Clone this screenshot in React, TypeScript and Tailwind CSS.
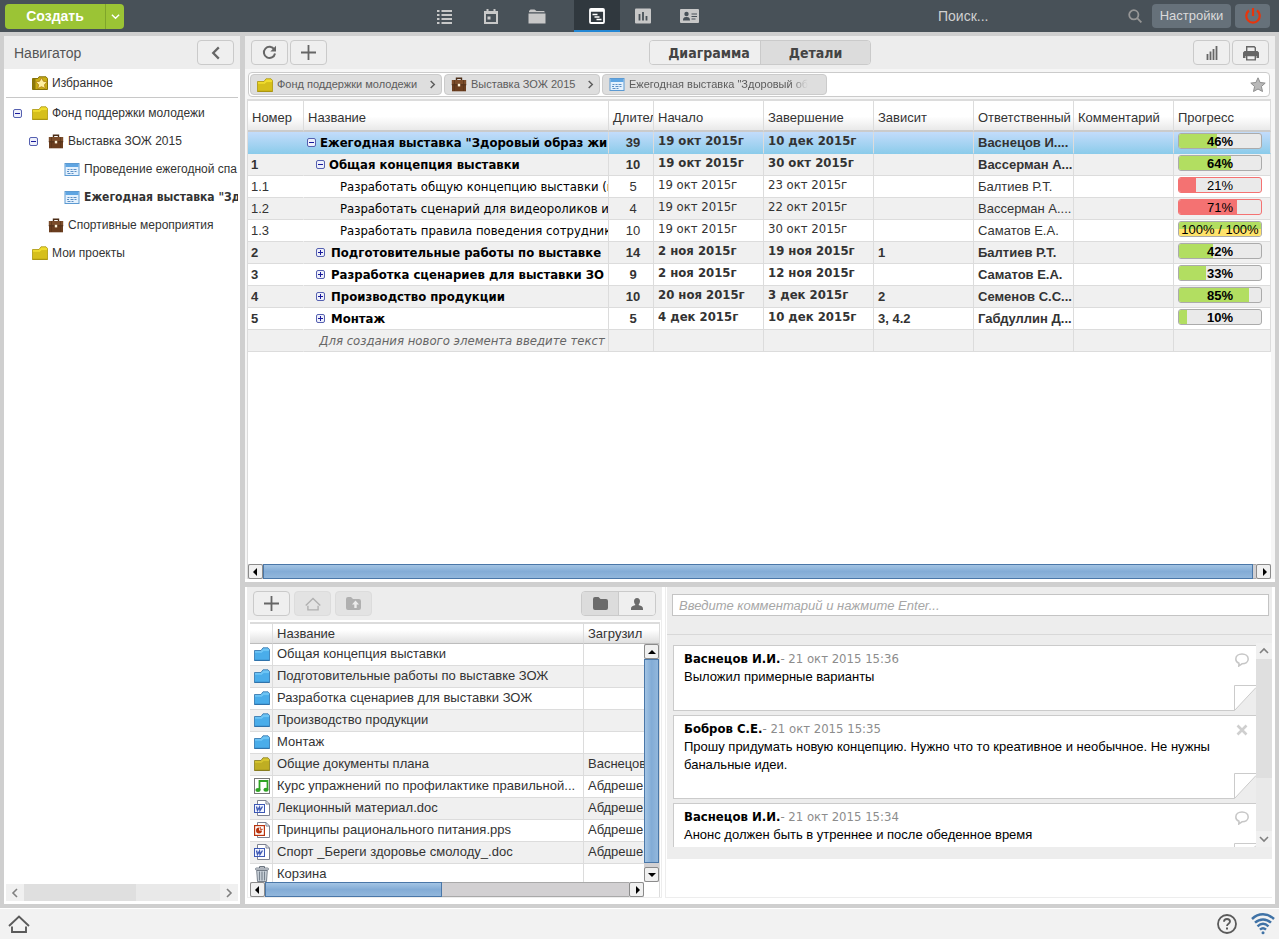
import type { ReactNode } from 'react'
import clsx from 'clsx'

const SANS = "font-['Liberation_Sans',Arial,sans-serif]"
const TAHOMA = "font-['DejaVu_Sans_Condensed','DejaVu_Sans',sans-serif]"

/* ---------- Icons ---------- */

const FolderIcon = ({ color = 'yellow' }: { color?: 'yellow' | 'blue' | 'olive' }) => {
  const tones = {
    yellow: ['#f0dc2e', '#cdb516', '#a8930c'],
    blue: ['#6cc4f5', '#3fa5e6', '#2b6ea8'],
    olive: ['#d6c52f', '#b7a620', '#857a1a'],
  }
  const [light, dark, line] = tones[color]
  return (
    <svg viewBox="0 0 16 14" className="h-3.5 w-4 shrink-0">
      <path d="M.5 13.5V3.500H7L9 .8h5l1.500 1.700v11z" fill={light} stroke={line} strokeWidth=".8" />
      <path d="M.9 5.500h7L9.600 4h5.500v9.100H.9z" fill={dark} fillOpacity=".75" />
      <path d="M1 5.200h6.800L9.500 3.600h5.600" fill="none" stroke={light} strokeWidth=".9" />
      <path d="M.5 13.300h15" stroke={line} strokeWidth="1" />
    </svg>
  )
}

const FavoriteIcon = () => (
  <svg viewBox="0 0 16 14" className="h-3.5 w-4 shrink-0">
    <path d="M.5 13.500v-11H6l1-1.700h7l1.500 1.700v11z" fill="#c9ae14" stroke="#86720a" />
    <path d="M.5 13V3h3v10z" fill="#8d780a" />
    <path
      d="M9.500 1.800l1.900 3.500 3.900.6-2.800 2.700.7 4-3.700-1.900-3.600 1.900.7-4-2.900-2.700 3.900-.6z"
      fill="#ffefa0"
      stroke="#b07d10"
      strokeWidth=".8"
    />
  </svg>
)

const BriefcaseIcon = () => (
  <svg viewBox="0 0 16 15" className="h-[15px] w-4 shrink-0">
    <path d="M5.500 3V1.200h5V3" fill="none" stroke="#4b2c16" strokeWidth="1.400" />
    <rect x=".8" y="3" width="14.400" height="5" fill="#7b4c2a" />
    <rect x="1" y="7.500" width="14" height="6.800" fill="#6a3d1e" />
    <path d="M.8 7.800h14.400" stroke="#4b2c16" strokeWidth=".9" />
    <path d="M3.500 3v11M12.500 3v11" stroke="#573319" strokeWidth=".7" />
    <rect x="6.800" y="6.800" width="2.400" height="2.600" fill="#fff3d8" />
  </svg>
)

const PlanIcon = () => (
  <svg viewBox="0 0 15 13" className="h-[13px] w-4 shrink-0">
    <rect x=".5" y=".5" width="14" height="12" fill="#e4f1fd" stroke="#5c9ad2" />
    <rect x="1" y="1" width="13" height="3" fill="#5fa5e2" />
    <path d="M3 6.500h2M6 6.500h2M9 6.500h3M2.500 8.500h2M6 8.500h3M10 8.500h2M3 10.500h3M7 10.500h2" stroke="#5c8fc4" />
  </svg>
)

const Expander = ({ open }: { open: boolean }) => (
  <svg viewBox="0 0 9 9" className="h-[9px] w-[9px] shrink-0">
    <rect x=".5" y=".5" width="8" height="8" rx="1.500" fill="#eef0fb" stroke="#5560b0" />
    <path d={open ? 'M2 4.500h5' : 'M2 4.500h5M4.500 2v5'} stroke="#1a1a9c" />
  </svg>
)

const PlusIcon = () => (
  <svg viewBox="0 0 15 15" className="h-[15px] w-[15px]">
    <path d="M7.500 0v15M0 7.500h15" stroke="#666" strokeWidth="1.800" />
  </svg>
)

const RefreshIcon = () => (
  <svg viewBox="0 0 15 15" className="h-[15px] w-[15px]">
    <path d="M12.300 4.500A5.600 5.600 0 1 0 13 8.500" fill="none" stroke="#666" strokeWidth="2" />
    <path d="M14 .8v5.700H8.300z" fill="#666" />
  </svg>
)

const HomeIcon = ({ className }: { className: string }) => (
  <svg viewBox="0 0 22 18" className={className} fill="none" stroke="currentColor" strokeWidth="1.900">
    <path d="M1 11L11 1.500 21 11" />
    <path d="M4 11.500v5.500h14v-5.500" />
  </svg>
)

const ArrowIcon = ({ dir }: { dir: 'left' | 'right' | 'up' | 'down' }) => {
  const shapes = { left: 'M5 0v8L1 4z', right: 'M3 0v8l4-4z', up: 'M0 6h8L4 2z', down: 'M0 2h8L4 6z' }
  return (
    <svg viewBox="0 0 8 8" className="h-2 w-2">
      <path d={shapes[dir]} fill="#000" />
    </svg>
  )
}

const Chevron = ({ dir, className }: { dir: 'left' | 'right' | 'up' | 'down'; className: string }) => {
  const shapes = { left: 'M7 1L3 5l4 4', right: 'M3 1l4 4-4 4', up: 'M1 7l4-4 4 4', down: 'M1 3l4 4 4-4' }
  return (
    <svg viewBox="0 0 10 10" className={className}>
      <path d={shapes[dir]} fill="none" stroke="currentColor" strokeWidth="1.600" />
    </svg>
  )
}

const MusicIcon = () => (
  <svg viewBox="0 0 16 16" className="h-4 w-4">
    <rect x=".5" y=".5" width="15" height="15" fill="#fff" stroke="#777" />
    <path d="M5.500 12V3h8v8.500" fill="none" stroke="#2fa324" strokeWidth="1.800" />
    <ellipse cx="4" cy="12" rx="2.600" ry="2" fill="#2fa324" />
    <ellipse cx="12" cy="11.700" rx="2.600" ry="2" fill="#2fa324" />
  </svg>
)

const DocIcon = ({ kind }: { kind: 'word' | 'slides' }) => (
  <svg viewBox="0 0 16 16" className="h-4 w-4">
    <path d="M3.500.5h8.500l3.500 3.500v11.500h-12z" fill="#fff" stroke="#7b8090" />
    <path d="M12 .5V4h3.500" fill="none" stroke="#7b8090" />
    {kind === 'word' ? (
      <>
        <rect x=".5" y="4.500" width="10" height="8" fill="#f2f5ff" stroke="#3c58b4" />
        <path d="M2.500 6.500l1 4 2-3.500.5 3.500 2.500-4" fill="none" stroke="#3c58b4" strokeWidth="1.400" />
      </>
    ) : (
      <>
        <rect x=".6" y="3.600" width="9.800" height="9.800" fill="#fff" stroke="#b8330e" strokeWidth="1.200" />
        <path d="M5 5.500a3 3 0 1 0 3 3H5z" fill="#b8330e" />
        <path d="M6.200 5v2.300h2.500" fill="none" stroke="#b8330e" />
      </>
    )}
  </svg>
)

const TrashIcon = () => (
  <svg viewBox="0 0 16 16" className="h-4 w-4">
    <path d="M5.500 2V.6h5V2" fill="none" stroke="#5d6773" />
    <rect x="1.500" y="2" width="13" height="2" rx="1" fill="#e3e7ec" stroke="#5d6773" strokeWidth=".8" />
    <path d="M2.700 4.500h10.600l-.8 11h-9z" fill="#cfd6de" stroke="#5d6773" strokeWidth=".8" />
    <path d="M5.500 5.500v9M8 5.500v9M10.500 5.500v9" stroke="#77828e" strokeWidth="1.200" />
  </svg>
)

/* ---------- Shared controls ---------- */

type ToolButtonProps = { label: string; disabled?: boolean; children: ReactNode }

const ToolButton = ({ label, disabled, children }: ToolButtonProps) => (
  <button
    type="button"
    aria-label={label}
    disabled={disabled}
    className={clsx(
      'flex h-[25px] w-[37px] items-center justify-center rounded border',
      disabled ? 'border-[#dcdcdc] bg-[#e3e3e3] text-[#b0b0b0]' : 'border-[#cacaca] bg-[#efefef] text-[#666]',
    )}
  >
    {children}
  </button>
)

const ScrollButton = ({ dir }: { dir: 'left' | 'right' | 'up' | 'down' }) => (
  <button
    type="button"
    aria-label={dir}
    className="flex h-[15px] w-[15px] shrink-0 items-center justify-center rounded-xs border border-[#8b8b8b] bg-[#f0f0f0]"
  >
    <ArrowIcon dir={dir} />
  </button>
)

const HScroll = ({ thumb }: { thumb: string }) => (
  <div className="flex h-[15px] bg-[#d2d0d2]">
    <ScrollButton dir="left" />
    <div className="flex-1 border-y border-[#a9a9a9] pr-[3px]">
      <div
        className={clsx(
          '-my-px h-[15px] border border-[#4a77a8] bg-linear-to-b from-[#a3c4e4] via-[#83acd6] to-[#92b7dc]',
          thumb,
        )}
      />
    </div>
    <ScrollButton dir="right" />
  </div>
)

/* ---------- Header ---------- */

const navItems = [
  {
    label: 'Список',
    icon: (
      <path d="M0 3h2.500M0 7h2.500M0 11h2.500M0 15h2.500M4.500 3H15M4.500 7H15M4.500 11H15M4.500 15H15" stroke="currentColor" strokeWidth="1.800" />
    ),
  },
  {
    label: 'Календарь',
    icon: (
      <g fill="none" stroke="currentColor" strokeWidth="2">
        <path d="M2 4h12v11H2zM2 5h12M4.500 1v3M11.500 1v3" />
        <path d="M4.500 10h3" strokeWidth="3" />
      </g>
    ),
  },
  {
    label: 'Файлы',
    icon: (
      <g fill="currentColor">
        <path d="M0 3l1.500-1.500h4L7.500 3H15l1 1.300H0z" />
        <path d="M-.5 5.500h17V15.500h-17z" />
      </g>
    ),
  },
  {
    label: 'Планы',
    active: true,
    icon: (
      <g fill="none" stroke="currentColor" strokeWidth="1.800">
        <rect x="1" y="1" width="14" height="14" rx="1" />
        <path d="M1 2.500h14" strokeWidth="2.500" />
        <path d="M3.500 6.500h5M5.500 9h5M7.500 11.500h5" strokeWidth="1.600" />
      </g>
    ),
  },
  {
    label: 'Отчеты',
    icon: (
      <>
        <rect y=".5" width="16" height="15" rx="1" fill="currentColor" />
        <path d="M4.500 12.500V6M8 12.500V4M11.500 12.500V8" stroke="#485158" strokeWidth="1.800" />
      </>
    ),
  },
  {
    label: 'Контакты',
    icon: (
      <>
        <rect x="-1" y="1" width="19" height="14" rx="1" fill="currentColor" />
        <circle cx="5.500" cy="6" r="2.200" fill="#485158" />
        <path
          d="M2 12.500c0-3 1.500-3.500 3.500-3.500s3.500.5 3.500 3.500zM10.500 5.500H16v1h-5.500zM10.500 8H16v1h-5.500zM10.500 10.500h4v1h-4z"
          fill="#485158"
        />
      </>
    ),
  },
]

const Header = () => (
  <header className="flex h-8 shrink-0 items-center bg-[#485158] text-[#c8c8c8]">
    <div className="w-[422px] shrink-0 pl-[5px]">
      <div className="flex h-[25px] w-[119px] overflow-hidden rounded bg-[#9bc435] text-white">
        <button type="button" className="flex-1 text-sm font-bold">
          Создать
        </button>
        <button
          type="button"
          aria-label="Ещё"
          className="flex w-[19px] items-center justify-center border-l border-[#7fa52a]"
        >
          <Chevron dir="down" className="h-[9px] w-[9px]" />
        </button>
      </div>
    </div>
    <nav className="flex h-full">
      {navItems.map((item) => (
        <a
          key={item.label}
          href="#"
          aria-label={item.label}
          className={clsx(
            'flex h-full w-[46px] items-center justify-center border-b-2 pt-0.5',
            item.active ? 'ml-3.5 border-[#2387d4] bg-[#30383e] text-white' : 'border-transparent',
          )}
        >
          <svg viewBox="0 0 16 16" className="h-4 w-4 overflow-visible">
            {item.icon}
          </svg>
        </a>
      ))}
    </nav>
    <div className="ml-auto flex items-center gap-1 pr-[9px]">
      <label className="flex w-[210px] items-center">
        <input
          type="text"
          aria-label="Поиск"
          placeholder="Поиск..."
          className="min-w-0 flex-1 bg-transparent text-sm placeholder:text-[#d0d0d0] focus:outline-none"
        />
        <svg viewBox="0 0 14 14" className="mr-1.5 h-3.5 w-3.5" fill="none" stroke="#969696" strokeWidth="1.800">
          <circle cx="5.800" cy="5.800" r="4.600" />
          <path d="M9.200 9.200l4.200 4.200" />
        </svg>
      </label>
      <button type="button" className="h-6 w-[79px] rounded bg-[#66717a] text-[13px] text-[#dadada]">
        Настройки
      </button>
      <button type="button" aria-label="Выход" className="flex h-6 w-[35px] items-center justify-center rounded bg-[#66717a]">
        <svg viewBox="0 0 16 16" className="h-4 w-4" fill="none" stroke="#e8350c" strokeWidth="2.200">
          <path d="M4 2.500a6.700 6.700 0 1 0 8 0" />
          <path d="M8 0v8" />
        </svg>
      </button>
    </div>
  </header>
)

/* ---------- Navigator ---------- */

type TreeItem = { text: string; level: number; icon: ReactNode; open?: boolean; bold?: boolean }

const tree: TreeItem[] = [
  { text: 'Фонд поддержки молодежи', level: 0, icon: <FolderIcon />, open: true },
  { text: 'Выставка ЗОЖ 2015', level: 1, icon: <BriefcaseIcon />, open: true },
  { text: 'Проведение ежегодной спа', level: 2, icon: <PlanIcon /> },
  { text: 'Ежегодная выставка "Зд', level: 2, icon: <PlanIcon />, bold: true },
  { text: 'Спортивные мероприятия', level: 1, icon: <BriefcaseIcon /> },
  { text: 'Мои проекты', level: 0, icon: <FolderIcon /> },
]

const indent = ['pl-[7px]', 'pl-[23px]', 'pl-[39px]']

const TreeRow = ({ text, level, icon, open, bold }: TreeItem) => (
  <li className={clsx('flex h-7 items-center', indent[level])}>
    <span className="mr-2.5 w-[9px] shrink-0">{open && <Expander open />}</span>
    {icon}
    <a href="#" className={clsx('ml-1 whitespace-nowrap', bold && `${TAHOMA} font-bold`)}>
      {text}
    </a>
  </li>
)

const Navigator = () => (
  <aside className="flex w-[236px] shrink-0 flex-col bg-white">
    <div className="flex h-[33px] shrink-0 items-center justify-between bg-[#ededed] pr-1.5 pl-2.5">
      <h2 className="text-sm text-[#555]">Навигатор</h2>
      <ToolButton label="Свернуть">
        <Chevron dir="left" className="h-3.5 w-3.5" />
      </ToolButton>
    </div>
    <div className="mx-0.5 flex flex-1 flex-col overflow-hidden text-xs text-[#333]">
      <ul className="mb-px border-b border-[#c8c8c8]">
        <TreeRow text="Избранное" level={0} icon={<FavoriteIcon />} />
      </ul>
      <ul>
        {tree.map((item) => (
          <TreeRow key={item.text} {...item} />
        ))}
      </ul>
      <div className="mt-auto mb-[3px] flex h-[17px] bg-[#e9e9e9] text-[#808080]">
        <button type="button" aria-label="Влево" className="flex w-[18px] items-center justify-center bg-[#f0f0f0]">
          <Chevron dir="left" className="h-2.5 w-2.5" />
        </button>
        <div className="flex-1">
          <div className="h-full w-[57%] bg-[#dfdfdf]" />
        </div>
        <button type="button" aria-label="Вправо" className="flex w-[18px] items-center justify-center bg-[#f0f0f0]">
          <Chevron dir="right" className="h-2.5 w-2.5" />
        </button>
      </div>
    </div>
  </aside>
)

/* ---------- Plan table ---------- */

type Task = {
  num: string
  name: string
  level: 0 | 1 | 2
  open?: boolean
  days: number
  start: string
  end: string
  deps?: string
  owner: string
  progress: number
  late?: boolean
  done?: boolean
}

const tasks: Task[] = [
  { num: '', name: 'Ежегодная выставка "Здоровый образ жи', level: 0, open: true, days: 39, start: '19 окт 2015г', end: '10 дек 2015г', owner: 'Васнецов И....', progress: 46 },
  { num: '1', name: 'Общая концепция выставки', level: 1, open: true, days: 10, start: '19 окт 2015г', end: '30 окт 2015г', owner: 'Вассерман А...', progress: 64 },
  { num: '1.1', name: 'Разработать общую концепцию выставки (в', level: 2, days: 5, start: '19 окт 2015г', end: '23 окт 2015г', owner: 'Балтиев Р.Т.', progress: 21, late: true },
  { num: '1.2', name: 'Разработать сценарий для видеороликов и', level: 2, days: 4, start: '19 окт 2015г', end: '22 окт 2015г', owner: 'Вассерман А....', progress: 71, late: true },
  { num: '1.3', name: 'Разработать правила поведения сотруднико', level: 2, days: 10, start: '19 окт 2015г', end: '30 окт 2015г', owner: 'Саматов Е.А.', progress: 100, done: true },
  { num: '2', name: 'Подготовительные работы по выставке', level: 1, open: false, days: 14, start: '2 ноя 2015г', end: '19 ноя 2015г', deps: '1', owner: 'Балтиев Р.Т.', progress: 42 },
  { num: '3', name: 'Разработка сценариев для выставки ЗО', level: 1, open: false, days: 9, start: '2 ноя 2015г', end: '12 ноя 2015г', owner: 'Саматов Е.А.', progress: 33 },
  { num: '4', name: 'Производство продукции', level: 1, open: false, days: 10, start: '20 ноя 2015г', end: '3 дек 2015г', deps: '2', owner: 'Семенов С.С...', progress: 85 },
  { num: '5', name: 'Монтаж', level: 1, open: false, days: 5, start: '4 дек 2015г', end: '10 дек 2015г', deps: '3, 4.2', owner: 'Габдуллин Д...', progress: 10 },
]

const columns = ['Номер', 'Название', 'Длител', 'Начало', 'Завершение', 'Зависит', 'Ответственный', 'Комментарий', 'Прогресс']

const taskIndent = ['pl-[3px]', 'pl-3', 'pl-9']

const cell = 'h-[22px] overflow-hidden border-r border-b border-[#dcdcdc] p-0 whitespace-nowrap'

const ProgressBar = ({ task }: { task: Task }) => (
  <div
    className={clsx(
      'relative h-4 w-[84px] overflow-hidden rounded-[3px] border bg-[#eaeaea]',
      task.late ? 'border-[#f47272]' : 'border-[#ababab]',
    )}
  >
    <div
      className={clsx(
        'absolute inset-y-0 left-0',
        task.late && 'bg-[#f47272]',
        task.done && 'bg-linear-to-b from-[#b2de61] from-50% to-[#ffe36b] to-50%',
        !task.late && !task.done && 'bg-[#b2de61]',
      )}
      style={{ width: `${task.progress}%` }}
    />
    <span className="relative block text-center leading-4 text-black">
      {task.done ? '100% / 100%' : `${task.progress}%`}
    </span>
  </div>
)

const TaskRow = ({ task }: { task: Task }) => {
  const group = task.level < 2
  const selected = task.level === 0
  return (
    <tr
      className={clsx(
        selected ? 'bg-linear-to-b from-[#c3dcfb] to-[#8acbea]' : 'odd:bg-white even:bg-[#f0f0f0]',
        group && 'font-bold',
      )}
    >
      <td className={clsx(cell, selected ? 'border-transparent' : 'border-r-transparent', 'pl-[3px]')}>{task.num}</td>
      <td className={clsx(cell, TAHOMA, selected && 'border-b-transparent', 'text-black')}>
        <div className={clsx('flex items-center', task.open ? 'gap-1' : 'gap-1.5', taskIndent[task.level])}>
          {group && <Expander open={!!task.open} />}
          <span>{task.name}</span>
        </div>
      </td>
      <td className={clsx(cell, selected && 'border-b-transparent', 'pl-1 text-center')}>{task.days}</td>
      <td className={clsx(cell, TAHOMA, selected && 'border-b-transparent', 'pb-[3px] pl-1')}>{task.start}</td>
      <td className={clsx(cell, TAHOMA, selected && 'border-b-transparent', 'pb-[3px] pl-1')}>{task.end}</td>
      <td className={clsx(cell, selected && 'border-b-transparent', 'pl-1')}>{task.deps}</td>
      <td className={clsx(cell, selected && 'border-b-transparent', 'pl-1')}>{task.owner}</td>
      <td className={clsx(cell, selected && 'border-b-transparent')} />
      <td className={clsx(cell, selected && 'border-b-transparent', 'pb-[3px] pl-1')}>
        <ProgressBar task={task} />
      </td>
    </tr>
  )
}

const PlanTable = () => (
  <table className="w-full table-fixed border-separate border-spacing-0 text-[13px] leading-[18px] text-[#333]">
    <colgroup>
      <col className="w-[56px]" />
      <col />
      <col className="w-[45px]" />
      <col className="w-[110px]" />
      <col className="w-[110px]" />
      <col className="w-[100px]" />
      <col className="w-[100px]" />
      <col className="w-[100px]" />
      <col className="w-[97px]" />
    </colgroup>
    <thead>
      <tr className="bg-linear-to-b from-white from-50% to-[#e6e6e6]">
        {columns.map((title) => (
          <th
            key={title}
            className="h-[31px] overflow-hidden border-r border-b-2 border-r-[#dcdcdc] border-b-[#cbcbcb] p-0 pt-1 pl-1 text-left font-normal whitespace-nowrap"
          >
            {title}
          </th>
        ))}
      </tr>
    </thead>
    <tbody>
      {tasks.map((task) => (
        <TaskRow key={task.name} task={task} />
      ))}
      <tr className="bg-[#f0f0f0]">
        <td className={clsx(cell, 'border-r-transparent')} />
        <td className={clsx(cell, TAHOMA, 'pl-3 text-center text-[#666] italic')}>
          Для создания нового элемента введите текст
        </td>
        {columns.slice(2).map((title) => (
          <td key={title} className={cell} />
        ))}
      </tr>
    </tbody>
  </table>
)

const crumb = 'flex h-[21px] items-center rounded border border-[#cbcbcb] bg-[#dedede] pl-1.5 text-[#5c5c5c]'

const Breadcrumbs = () => (
  <nav className="flex h-[25px] items-center gap-0.5 rounded-sm border border-[#cbcbcb] bg-white px-px text-[11px]">
    <a href="#" className={clsx(crumb, 'w-[192px]')}>
      <FolderIcon />
      <span className="ml-1 whitespace-nowrap">Фонд поддержки молодежи</span>
      <Chevron dir="right" className="mr-1 ml-auto h-[9px] w-[9px] shrink-0" />
    </a>
    <a href="#" className={clsx(crumb, 'w-[156px]')}>
      <BriefcaseIcon />
      <span className="ml-1 whitespace-nowrap">Выставка ЗОЖ 2015</span>
      <Chevron dir="right" className="mr-1 ml-auto h-[9px] w-[9px] shrink-0" />
    </a>
    <a href="#" className={clsx(crumb, 'w-[225px] pr-[18px]')}>
      <PlanIcon />
      <span className="ml-1 overflow-hidden mask-r-from-90% whitespace-nowrap">Ежегодная выставка "Здоровый об</span>
    </a>
    <button type="button" aria-label="В избранное" className="mr-0.5 ml-auto">
      <svg viewBox="0 0 16 15" className="h-[15px] w-4">
        <path
          d="M8 .8l2.100 4.700 5.100.6-3.800 3.400 1.100 5L8 12l-4.500 2.500 1.100-5L.8 6.100l5.100-.6z"
          fill="#b9b9b9"
          stroke="#8d8d8d"
        />
      </svg>
    </button>
  </nav>
)

const PlanPanel = () => (
  <section className="flex min-h-0 flex-1 flex-col bg-[#f6f6f6]">
    <div className="flex h-[33px] shrink-0 items-center gap-0.5 bg-[#ededed] px-1.5">
      <div className="flex flex-1 gap-0.5">
        <ToolButton label="Обновить">
          <RefreshIcon />
        </ToolButton>
        <ToolButton label="Добавить">
          <PlusIcon />
        </ToolButton>
      </div>
      <div
        className={clsx(
          TAHOMA,
          'flex h-[25px] overflow-hidden rounded border border-[#cacaca] text-sm font-bold text-[#444]',
        )}
      >
        <button type="button" className="w-[110px] bg-[#efefef] pl-2">
          Диаграмма
        </button>
        <button type="button" className="w-[110px] border-l border-[#cacaca] bg-[#dcdcdc]">
          Детали
        </button>
      </div>
      <div className="flex flex-1 justify-end gap-0.5">
        <ToolButton label="График">
          <svg viewBox="0 0 12 14" className="h-3.5 w-3" stroke="currentColor" strokeWidth="1.800">
            <path d="M1.500 14V8M4.500 14V5.500M7.500 14V3M10.500 14V0" />
          </svg>
        </ToolButton>
        <ToolButton label="Печать">
          <svg viewBox="0 0 16 16" className="h-4 w-4" fill="currentColor">
            <path d="M3 1h8.500L13 2.500V7h-1.400V3L11 2.400H4.400V7H3z" />
            <path d="M1.500 6h13L16 7.500V13h-2.500v-2h-11v2H0V7.500z" />
            <path d="M3 10h10v5.500H3zm1.400 1.300v2.900h7.200v-2.900z" />
          </svg>
        </ToolButton>
      </div>
    </div>
    <div className="pt-[3px] pr-[5px] pb-0.5 pl-[3px]">
      <Breadcrumbs />
    </div>
    <div className="mr-1 ml-0.5 flex flex-1 flex-col overflow-hidden border-t-2 border-l border-[#dcdcdc] bg-white">
      <div className="flex-1 overflow-hidden">
        <PlanTable />
      </div>
      <HScroll thumb="w-full" />
    </div>
    <div className="h-[3px] bg-white" />
  </section>
)

/* ---------- Files ---------- */

const files: { icon: ReactNode; name: string; owner?: string }[] = [
  { icon: <FolderIcon color="blue" />, name: 'Общая концепция выставки' },
  { icon: <FolderIcon color="blue" />, name: 'Подготовительные работы по выставке ЗОЖ' },
  { icon: <FolderIcon color="blue" />, name: 'Разработка сценариев для выставки ЗОЖ' },
  { icon: <FolderIcon color="blue" />, name: 'Производство продукции' },
  { icon: <FolderIcon color="blue" />, name: 'Монтаж' },
  { icon: <FolderIcon color="olive" />, name: 'Общие документы плана', owner: 'Васнецов' },
  { icon: <MusicIcon />, name: 'Курс упражнений по профилактике правильной...', owner: 'Абдреше' },
  { icon: <DocIcon kind="word" />, name: 'Лекционный материал.doc', owner: 'Абдреше' },
  { icon: <DocIcon kind="slides" />, name: 'Принципы рационального питания.pps', owner: 'Абдреше' },
  { icon: <DocIcon kind="word" />, name: 'Спорт _Береги здоровье смолоду_.doc', owner: 'Абдреше' },
  { icon: <TrashIcon />, name: 'Корзина' },
]

const fileHead =
  'h-5 overflow-hidden border-r border-b border-r-[#dcdcdc] border-b-[#bdbdbd] p-0 pl-1 text-left font-normal whitespace-nowrap'

const FilesPanel = () => (
  <section className="flex w-[415px] shrink-0 flex-col border-x border-b border-[#ededed]">
    <div className="flex h-[33px] shrink-0 items-center gap-1 bg-[#ededed] px-[5px]">
      <ToolButton label="Добавить файл">
        <PlusIcon />
      </ToolButton>
      <ToolButton label="Корень" disabled>
        <HomeIcon className="h-3.5 w-4" />
      </ToolButton>
      <ToolButton label="Вверх" disabled>
        <svg viewBox="0 0 15 13" className="h-[13px] w-[15px]">
          <path d="M0 2Q0 0 2 0h3l2 2h6q2 0 2 2v7q0 2-2 2H2q-2 0-2-2z" fill="currentColor" />
          <path d="M9.500 3.500L6 7.500h2.300V11h2.400V7.500H13z" fill="#ececec" />
        </svg>
      </ToolButton>
      <div className="ml-auto flex h-[25px] overflow-hidden rounded border border-[#cacaca] text-[#6b6b6b]">
        <button type="button" aria-label="Файлы" className="flex w-9 items-center justify-center bg-[#dcdcdc]">
          <svg viewBox="0 0 15 13" className="h-[13px] w-[15px]">
            <path d="M0 2Q0 0 2 0h3.500l2 2h5.500q2 0 2 2v7q0 2-2 2H2q-2 0-2-2z" fill="currentColor" />
          </svg>
        </button>
        <button
          type="button"
          aria-label="Участники"
          className="flex w-[37px] items-center justify-center border-l border-[#cacaca] bg-[#efefef]"
        >
          <svg viewBox="0 0 12 12" className="h-3 w-3" fill="currentColor">
            <path d="M6 0c2 0 3 1.500 3 3.200S7.800 6.500 7.500 7C9 8 12 7.500 12 11v1H0v-1c0-3.500 3-3 4.500-4C4.200 6.500 3 5 3 3.200S4 0 6 0z" />
          </svg>
        </button>
      </div>
    </div>
    <div className="mt-0.5 mr-px ml-0.5 flex min-h-0 flex-1 flex-col border-t-2 border-r border-[#dcdcdc] text-[13px] text-[#333]">
      <div className="flex min-h-0 flex-1 overflow-hidden">
        <div className="min-w-0 flex-1">
          <table className="w-full table-fixed border-separate border-spacing-0">
            <colgroup>
              <col className="w-[23px]" />
              <col />
              <col className="w-[60px]" />
            </colgroup>
            <thead>
              <tr className="bg-linear-to-b from-white from-30% to-[#dedede] leading-[18px]">
                <th aria-label="Тип" className={fileHead} />
                <th className={fileHead}>Название</th>
                <th className={clsx(fileHead, 'border-r-0')}>Загрузил</th>
              </tr>
            </thead>
            <tbody className="leading-5">
              {files.map((file) => (
                <tr key={file.name} className="odd:bg-white even:bg-[#f0f0f0]">
                  <td className={clsx(cell, 'pl-1 align-top')}>
                    <div className="flex h-[19px] items-center">{file.icon}</div>
                  </td>
                  <td className={clsx(cell, 'pl-1 align-top')}>{file.name}</td>
                  <td className={clsx(cell, 'border-r-0 pl-1 align-top')}>{file.owner}</td>
                </tr>
              ))}
            </tbody>
          </table>
        </div>
        <div className="flex w-[15px] flex-col bg-[#d2d0d2]">
          <div className="h-5 shrink-0 border-b border-[#bdbdbd] bg-linear-to-b from-white from-30% to-[#dedede]" />
          <ScrollButton dir="up" />
          <div className="flex-1 pb-1">
            <div className="h-full border border-[#4a77a8] bg-linear-to-r from-[#a3c4e4] via-[#83acd6] to-[#92b7dc]" />
          </div>
          <ScrollButton dir="down" />
        </div>
      </div>
      <div className="pr-[15px]">
        <HScroll thumb="w-[49%]" />
      </div>
    </div>
  </section>
)

/* ---------- Comments ---------- */

const comments = [
  { author: 'Васнецов И.И.', date: '21 окт 2015 15:36', text: 'Выложил примерные варианты', own: false },
  {
    author: 'Бобров С.Е.',
    date: '21 окт 2015 15:35',
    text: 'Прошу придумать новую концепцию. Нужно что то креативное и необычное. Не нужны банальные идеи.',
    own: true,
  },
  { author: 'Васнецов И.И.', date: '21 окт 2015 15:34', text: 'Анонс должен быть в утреннее и после обеденное время', own: false },
]

const CommentCard = ({ author, date, text, own }: (typeof comments)[number]) => (
  <article className="relative shrink-0 border border-r-0 border-[#cbcbcb] bg-white pt-1 pr-9 pb-6 pl-2.5 text-[13px] leading-[18px] text-black">
    <h3 className={TAHOMA}>
      <b>{author}</b>
      <span className="text-[#8c8c8c]">- {date}</span>
    </h3>
    <p>{text}</p>
    <button type="button" aria-label={own ? 'Удалить' : 'Ответить'} className="absolute top-[7px] right-[7px]">
      {own ? (
        <svg viewBox="0 0 14 14" className="h-3.5 w-3.5">
          <path d="M2.500 2.500l9 9M11.500 2.500l-9 9" stroke="#cfcfcf" strokeWidth="2.600" />
        </svg>
      ) : (
        <svg viewBox="0 0 14 14" className="h-3.5 w-3.5" fill="none" stroke="#c6c6c6" strokeWidth="1.500">
          <path d="M4 10.300C2 9.500.8 8 .8 6 .8 3 3.500 1 7 1s6.200 2 6.200 5S10.500 10.800 7 10.800L3.800 13z" />
        </svg>
      )}
    </button>
    <svg viewBox="0 0 22 26" className="absolute right-0 -bottom-px h-[26px] w-[22px]">
      <path d="M0 26L22 2v24z" fill="#ededed" />
      <path d="M22 .5H.5v25L22 2.500" fill="#fff" stroke="#cbcbcb" />
    </svg>
  </article>
)

const CommentsPanel = () => (
  <section className="flex min-w-0 flex-1 flex-col border-b border-l border-[#ededed] pl-px">
    <div className="flex h-[272px] flex-col bg-[#ededed] pb-3">
      <div className="border-b border-[#d8d8d8] pt-[7px] pr-[3px] pb-[18px] pl-[5px]">
        <input
          type="text"
          aria-label="Комментарий"
          placeholder="Введите комментарий и нажмите Enter..."
          className="block h-[22px] w-full border border-[#c4c4c4] bg-white px-1.5 text-[13px] placeholder:text-[#a6a6a6] placeholder:italic focus:outline-none"
        />
      </div>
      <div className="mt-2 flex min-h-0 flex-1">
        <div className="flex flex-1 flex-col gap-1 overflow-hidden pt-0.5 pl-1.5">
          {comments.map((comment) => (
            <CommentCard key={comment.date} {...comment} />
          ))}
        </div>
        <div className="flex w-4 flex-col bg-[#e9e9e9] text-[#808080]">
          <button type="button" aria-label="Вверх" className="flex h-4 items-center justify-center bg-[#f0f0f0]">
            <Chevron dir="up" className="h-2.5 w-2.5" />
          </button>
          <div className="flex-1">
            <div className="h-[69%] bg-[#dfdfdf]" />
          </div>
          <button type="button" aria-label="Вниз" className="flex h-4 items-center justify-center bg-[#f0f0f0]">
            <Chevron dir="down" className="h-2.5 w-2.5" />
          </button>
        </div>
      </div>
    </div>
  </section>
)

/* ---------- Footer ---------- */

const Footer = () => (
  <footer className="flex h-[31px] shrink-0 items-center justify-between border-t border-white bg-[#f2f2f2] pr-1 pl-2">
    <a href="#" aria-label="Домой" className="text-[#5a5a5a]">
      <HomeIcon className="h-[18px] w-[22px]" />
    </a>
    <div className="flex items-center gap-3.5">
      <a href="#" aria-label="Помощь">
        <svg viewBox="0 0 20 20" className="h-5 w-5" fill="none" stroke="#5a5a5a" strokeWidth="1.800">
          <circle cx="10" cy="10" r="9" />
          <path d="M7 7.800C7 6 8.300 5 10 5s3 1 3 2.600c0 2.200-3 2.200-3 4.400" />
          <path d="M10 13.500v2" strokeWidth="2" />
        </svg>
      </a>
      <svg viewBox="0 0 24 24" className="h-6 w-6" fill="none" stroke="#3f72a6" strokeWidth="2.500">
        <path d="M1 7C7.500.8 16.500.8 23 7" />
        <path d="M4 10.700c4.800-4.400 11.200-4.400 16 0" />
        <path d="M6.500 14.300c3.500-3.200 7.500-3.200 11 0" />
        <path d="M9 17.600c2-1.700 4-1.700 6 0" />
        <circle cx="12" cy="20.800" r="1.500" fill="#3f72a6" stroke="none" />
      </svg>
    </div>
  </footer>
)

const App = () => (
  <div className={clsx(SANS, 'flex h-screen flex-col bg-[#cfcfcf]')}>
    <Header />
    <main className="flex min-h-0 flex-1 gap-[5px] p-1">
      <Navigator />
      <div className="flex min-w-0 flex-1 flex-col gap-[5px]">
        <PlanPanel />
        <div className="flex h-[317px] shrink-0 gap-[3px] bg-white pr-[3px] pb-1.5 pl-0.5">
          <FilesPanel />
          <CommentsPanel />
        </div>
      </div>
    </main>
    <Footer />
  </div>
)

export default App
